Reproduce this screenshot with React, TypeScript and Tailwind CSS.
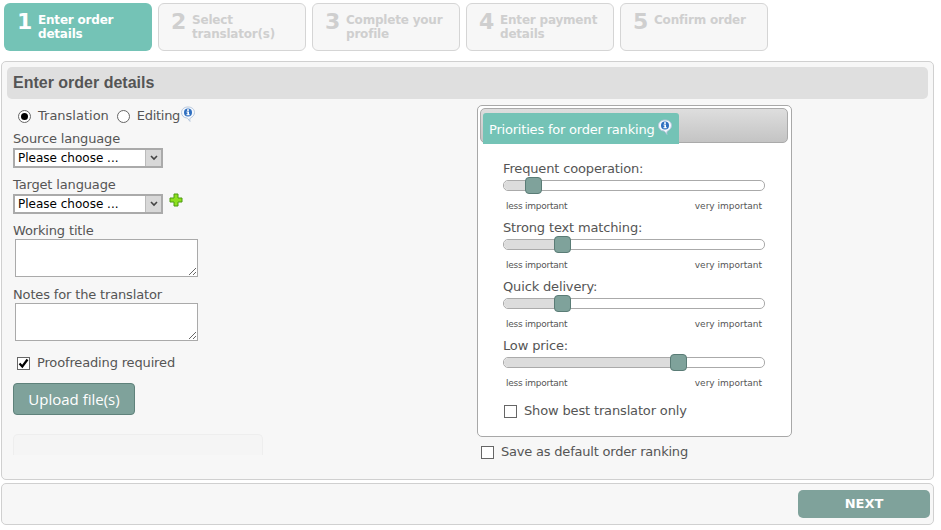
import React from "react";

const Info = () => (
  <svg width="16" height="17" viewBox="0 0 16 17" className="block">
    <path d="M8 1C4 1 1.500 3.400 1.500 6.600c0 3 2.200 5.200 5.300 5.400 1 .1 1.500 1.500 3.200 3.400-.4-1.600-.2-2.700.5-3.500 2.200-.9 4-2.900 4-5.400C14.500 3.400 12 1 8 1z" fill="#f4f8fd" stroke="#b5c6dc" strokeWidth="1" />
    <circle cx="8" cy="6.500" r="4" fill="#2f6fc0" />
    <rect x="7" y="3.300" width="2" height="1.500" fill="#fff" />
    <path d="M6.500 5.500h2.500v2.700h.8v1H6.400v-1h1V6.500h-.9z" fill="#fff" />
  </svg>
);

const Plus = () => (
  <svg width="14" height="14" viewBox="0 0 14 14" className="block">
    <path d="M5 1h4v4h4v4H9v4H5V9H1V5h4z" fill="#8de01e" stroke="#4c9a10" strokeWidth="1" />
  </svg>
);

const Arrow = () => (
  <svg width="8" height="6" viewBox="0 0 8 6"><path d="M1 1l3 3 3-3" fill="none" stroke="#444" strokeWidth="1.600" /></svg>
);

const Step = ({ n, l1, l2, active }: { n: string; l1: string; l2?: string; active?: boolean }) => (
  <div className={active ? "flex w-[148px] h-[48px] rounded-[6px] bg-[#74c3b6] text-white" : "flex w-[148px] h-[48px] rounded-[6px] border border-[#d5d5d5] bg-[#f7f7f7] text-[#cfcfcf]"}>
    <div className={active ? "w-[34px] pl-[13px] pt-[4px] text-[22px] leading-[30px] font-bold" : "w-[33px] pl-[12px] pt-[3px] text-[22px] leading-[30px] font-bold"}>{n}</div>
    <div className={active ? "pt-[10px] text-[12px] leading-[14px] font-bold tracking-[-0.2px]" : "pt-[9px] text-[12px] leading-[14px] font-bold tracking-[-0.2px]"}>
      <div>{l1}</div>
      {l2 && <div>{l2}</div>}
    </div>
  </div>
);

const Label = ({ children, className }: { children: React.ReactNode; className?: string }) => (
  <div className={`text-[13px] leading-[16px] tracking-[-0.15px] text-[#555] whitespace-nowrap ${className ?? ""}`}>{children}</div>
);

const Select = () => (
  <div className="flex w-[150px] h-[20px] border-2 border-[#aaa] bg-white">
    <div className="flex-1 pl-[3px] text-[12px] leading-[16px] text-black">Please choose ...</div>
    <div className="w-[16px] flex items-center justify-center bg-[#d8d8d8] border-l border-[#bbb]"><Arrow /></div>
  </div>
);

const Check = ({ checked }: { checked?: boolean }) => (
  <span className="flex items-center justify-center w-[13px] h-[13px] border border-[#666] bg-white shrink-0">
    {checked && (
      <svg width="11" height="11" viewBox="0 0 11 11"><path d="M1.500 5.500l2.800 3L9.500 1.500" fill="none" stroke="#000" strokeWidth="2.200" /></svg>
    )}
  </span>
);

const Radio = ({ checked }: { checked?: boolean }) => (
  <span className="flex items-center justify-center w-[13px] h-[13px] rounded-full border border-[#666] bg-white shrink-0">
    {checked && <span className="w-[7px] h-[7px] rounded-full bg-black" />}
  </span>
);

const Slider = ({ label, pos }: { label: string; pos: number }) => (
  <div className="h-[59px] pl-[23px]">
    <Label className="h-[16px]">{label}</Label>
    <div className="relative mt-[3px] w-[262px] h-[11px] rounded-[5px] border border-[#aaa] bg-white">
      <div className="h-full rounded-l-[5px] bg-[#dcdcdc]" style={{ width: pos + 8 }} />
      <div className="absolute top-[-4px] w-[17px] h-[17px] rounded-[4px] border border-[#5a7c76] bg-[#7fa29b]" style={{ left: pos }} />
    </div>
    <div className="mt-[9px] w-[262px] flex justify-between px-[3px] text-[9px] leading-[12px] text-[#555]">
      <span className="tracking-[-0.25px]">less important</span>
      <span>very important</span>
    </div>
  </div>
);

export default function App() {
  return (
    <div className="w-[941px] h-[530px] bg-white font-['DejaVu_Sans',sans-serif] overflow-hidden">
      <div className="flex gap-[6px] pl-[4px] pt-[3px] h-[61px]">
        <Step n="1" l1="Enter order" l2="details" active />
        <Step n="2" l1="Select" l2="translator(s)" />
        <Step n="3" l1="Complete your" l2="profile" />
        <Step n="4" l1="Enter payment" l2="details" />
        <Step n="5" l1="Confirm order" />
      </div>

      <div className="ml-[1px] w-[933px] h-[419px] rounded-[5px] border border-[#d0d0d0] bg-[#f7f7f7] px-[5px] pt-[5px]">
        <div className="h-[32px] rounded-[5px] bg-[#dfdfdf] pl-[6px] text-[16px] leading-[31px] font-bold text-[#555] font-['Liberation_Sans',sans-serif]">
          Enter order details
        </div>

        <div className="flex">
          <div className="w-[470px] pl-[6px]">
            <div className="flex items-center h-[22px] mt-[6px] pl-[5px]">
              <Radio checked />
              <span className="ml-[7px] text-[13px] text-[#555]">Translation</span>
              <span className="ml-[8px]"><Radio /></span>
              <span className="ml-[7px] text-[13px] tracking-[-0.3px] text-[#555]">Editing</span>
              <span className="mb-[3px]"><Info /></span>
            </div>
            <Label className="mt-[4px]">Source language</Label>
            <div className="mt-[1px]"><Select /></div>
            <Label className="mt-[9px]">Target language</Label>
            <div className="flex mt-[1px]">
              <Select />
              <span className="ml-[6px] mt-[-1px]"><Plus /></span>
            </div>
            <Label className="mt-[9px]">Working title</Label>
            <textarea className="block ml-[2px] w-[183px] h-[38px] border border-[#aaa] bg-white outline-none" />
            <Label className="mt-[10px]">Notes for the translator</Label>
            <textarea className="block ml-[2px] w-[183px] h-[38px] border border-[#aaa] bg-white outline-none" />
            <div className="flex items-center h-[16px] mt-[14px] pl-[4px]">
              <Check checked />
              <span className="ml-[7px] text-[13px] tracking-[-0.15px] text-[#555]">Proofreading required</span>
            </div>
            <button className="block mt-[12px] w-[122px] h-[32px] rounded-[4px] border border-[#5f827b] bg-[#7fa29b] text-[15px] text-white font-['Open_Sans','DejaVu_Sans',sans-serif]">
              Upload file(s)
            </button>
            <div className="mt-[19px] w-[250px] h-[21px] rounded-t-[5px] border-t border-x border-[#eeeeee] bg-[#f5f5f5]" />
          </div>

          <div>
            <div className="mt-[6px] w-[315px] h-[332px] rounded-[5px] border border-[#a8a8a8] bg-white pt-[2px] pl-[2px]">
              <div className="relative w-[308px] h-[35px] rounded-[5px] border border-[#aaa] bg-gradient-to-b from-[#dedede] to-[#c4c4c4]">
                <div className="absolute left-[2px] top-[4px] w-[196px] h-[31px] rounded-t-[3px] bg-[#74c3b6] flex text-[13px] leading-[34px] tracking-[-0.2px] whitespace-nowrap text-white pl-[6px]">
                  <span>Priorities for order ranking</span>
                  <span className="ml-[3px] mt-[6px]"><Info /></span>
                </div>
              </div>
              <div className="pt-[18px]">
                <Slider label="Frequent cooperation:" pos={21} />
                <Slider label="Strong text matching:" pos={50} />
                <Slider label="Quick delivery:" pos={50} />
                <Slider label="Low price:" pos={166} />
                <div className="flex items-center h-[16px] ml-[24px] mt-[6px]">
                  <Check />
                  <span className="ml-[7px] text-[13px] tracking-[-0.15px] text-[#555]">Show best translator only</span>
                </div>
              </div>
            </div>
            <div className="flex items-center h-[16px] ml-[4px] mt-[7px]">
              <Check />
              <span className="ml-[7px] text-[13px] tracking-[-0.2px] text-[#555]">Save as default order ranking</span>
            </div>
          </div>
        </div>
      </div>

      <div className="ml-[1px] mt-[3px] w-[933px] h-[42px] rounded-[5px] border border-[#d0d0d0] bg-[#f7f7f7] flex justify-end items-center pr-[3px]">
        <button className="w-[132px] h-[28px] rounded-[5px] bg-[#7fa29b] text-[13px] font-bold text-white">NEXT</button>
      </div>
    </div>
  );
}
